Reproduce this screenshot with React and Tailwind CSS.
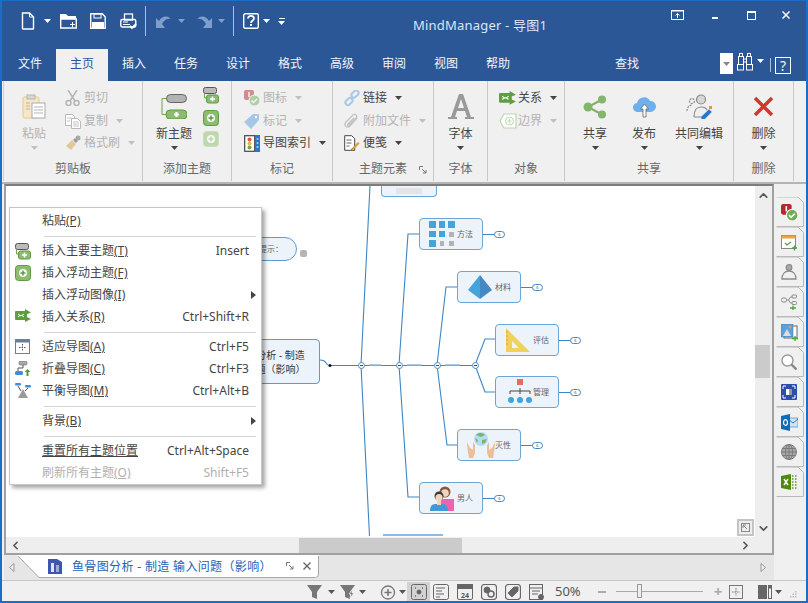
import { ChevronUp, ChevronDown, ChevronLeft, ChevronRight } from "lucide-react";

const Caret = ({ color = "#444", className = "" }) => (
  <svg width="7" height="4" viewBox="0 0 7 4" className={className}><polygon points="0,0 7,0 3.5,4" fill={color} /></svg>
);

// title bar icons
const QatNew = () => (
  <svg width="14" height="18" viewBox="0 0 14 18" fill="none" stroke="#fff" strokeWidth="1.4"><path d="M1.5 1h7l4 4v11.5a.5.5 0 0 1-.5.5H2a.5.5 0 0 1-.5-.5z" /><path d="M8.5 1v4h4" strokeWidth="1" /></svg>
);
const QatOpen = () => (
  <svg width="17" height="16" viewBox="0 0 17 16"><path d="M0 1h6l2 2h8v3H0z" fill="#fff" /><path d="M.7 6h15.6v9H.7z" fill="none" stroke="#fff" strokeWidth="1.4" /><path d="M10 11.5h5M12.5 9v5" stroke="#fff" /></svg>
);
const QatSave = () => (
  <svg width="16" height="16" viewBox="0 0 16 16"><path d="M.7.7h11.5l3 3v11.6H.7z" fill="none" stroke="#fff" strokeWidth="1.4" /><rect x="2" y="9" width="12" height="6" fill="#fff" /><rect x="4" y="1" width="7" height="4" fill="none" stroke="#fff" /></svg>
);
const QatPrint = () => (
  <svg width="17" height="17" viewBox="0 0 17 17" fill="none" stroke="#fff"><rect x="4.5" y="1" width="8" height="6" strokeWidth="1.3" /><rect x=".8" y="6.5" width="15" height="7.5" rx="1.5" strokeWidth="1.4" /><path d="M3 9h5M3 11.5h7" /><path d="M10 13l2 2 4-4" strokeWidth="1.8" /></svg>
);
const QatUndo = ({ flip }) => (
  <svg width="17" height="16" viewBox="0 0 17 16" style={flip ? { transform: "scaleX(-1)" } : undefined}><path d="M1 15V5l3 3C7 3 12 2 16 6c-4-1-7 1-9 5l3 4z" fill="#7f9fca" /></svg>
);
const QatHelp = () => (
  <svg width="16" height="16" viewBox="0 0 16 16"><rect x=".7" y=".7" width="14.600" height="14.600" rx="1.500" fill="none" stroke="#fff" strokeWidth="1.4" /><path d="M5 5.500c0-3.500 6-3.500 6 0 0 2-3 2-3 4.500" fill="none" stroke="#fff" strokeWidth="1.800" /><rect x="7" y="11" width="2" height="2" fill="#fff" /></svg>
);
const Binoculars = () => (
  <svg width="16" height="18" viewBox="0 0 16 18" fill="none" stroke="#fff"><rect x="2.500" y=".5" width="3" height="3" /><rect x="10.500" y=".5" width="3" height="3" /><rect x="1.500" y="3.500" width="5" height="8" /><rect x="9.500" y="3.500" width="5" height="8" /><rect x=".5" y="11.500" width="6" height="5.500" /><rect x="9.500" y="11.500" width="6" height="5.500" /><path d="M6.500 6h3M6.500 9h3" /></svg>
);

// ribbon icons
const PasteIcon = () => (
  <svg width="24" height="26" viewBox="0 0 24 26"><rect x="1" y="3" width="16" height="21" rx="1.500" fill="#f7e6c6" stroke="#e8c78e" /><rect x="5" y="1" width="8" height="4" fill="#d8d8d8" stroke="#b5b5b5" /><rect x="10" y="9" width="13" height="15" fill="#fff" stroke="#a9a9a9" /><path d="M12 13h9M12 16h9M12 19h9M4 9h4M4 12h4M4 15h4" stroke="#b5b5b5" /></svg>
);
const CutIcon = () => (
  <svg width="15" height="16" viewBox="0 0 15 16" fill="none" stroke="#b5b5b5"><path d="M3 0l7 11M12 0L5 11" strokeWidth="1.500" /><circle cx="3.500" cy="13" r="2.500" strokeWidth="1.500" /><circle cx="11.500" cy="13" r="2.500" strokeWidth="1.500" /></svg>
);
const CopyIcon = () => (
  <svg width="16" height="16" viewBox="0 0 16 16" fill="#fff" stroke="#b8b8b8"><path d="M.5 1.500h7l2 2v9h-9z" /><path d="M6.500 5.500h6l3 3v7h-9z" /><path d="M2 5h5M2 8h3M8 9h6M8 11h6M8 13h6" strokeWidth=".8" /></svg>
);
const BrushIcon = () => (
  <svg width="16" height="16" viewBox="0 0 16 16"><path d="M1 11l6-6 4 4-5 6z" fill="#e1c79b" /><path d="M8 5l2-2 3 3-2 2z" fill="#9a9a9a" /><circle cx="13" cy="3" r="2.500" fill="#a8a8a8" /></svg>
);
const NewTopicIcon = () => (
  <svg width="26" height="25" viewBox="0 0 26 25"><path d="M6 4.500H1v16h5" fill="none" stroke="#6fa552" /><rect x="5.500" y=".5" width="20" height="8" rx="4" fill="#b3b3b3" stroke="#666" /><rect x="5" y="16" width="21" height="9" rx="4" fill="#8dbb6f" stroke="#5f9a45" /><path d="M13 20.500h5M15.500 18v5" stroke="#fff" strokeWidth="2" /></svg>
);
const SubTopicIcon = () => (
  <svg width="16" height="17" viewBox="0 0 16 17"><rect x=".5" y=".5" width="13" height="6" rx="2" fill="#bbb" stroke="#555" /><path d="M1.500 7v4h2" fill="none" stroke="#6fa552" /><rect x="3.500" y="8" width="12" height="8" rx="2" fill="#8dbb6f" stroke="#5f9a45" /><path d="M7 12h5M9.500 9.500v5" stroke="#fff" strokeWidth="1.500" /></svg>
);
const FloatIcon = ({ pale }) => (
  <svg width="16" height="16" viewBox="0 0 16 16"><rect x=".5" y=".5" width="15" height="15" rx="3" fill={pale ? "#bcd8ac" : "#8dbb6f"} stroke={pale ? "#c9dfbc" : "#5f9a45"} /><circle cx="8" cy="8" r="4" fill="#fff" opacity=".9" /><path d="M5.500 8h5M8 5.500v5" stroke={pale ? "#bcd8ac" : "#5f9a45"} strokeWidth="1.500" /></svg>
);
const MarkerIcon = ({ size = 17, pale }) => (
  <svg width={size} height={size} viewBox="0 0 16 16" opacity={pale ? 0.5 : 1}><rect x="0" y="0" width="10" height="10" rx="2" fill="#b5282e" /><path d="M5 2v5" stroke="#fff" strokeWidth="1.500" /><circle cx="10.500" cy="10.500" r="5.500" fill="#71ad58" stroke="#fff" /><path d="M7.500 10.500l2 2 3.500-3.500" stroke="#fff" strokeWidth="1.500" fill="none" /></svg>
);
const TagIcon = () => (
  <svg width="16" height="16" viewBox="0 0 16 16"><path d="M0 9l9-8h6v6l-8 9z" fill="#a6c7e8" /><circle cx="12" cy="4" r="1.200" fill="#fff" /></svg>
);
const IndexIcon = () => (
  <svg width="16" height="17" viewBox="0 0 16 17"><rect x=".7" y=".7" width="10" height="15.600" fill="#fff" stroke="#444" strokeWidth="1.200" /><circle cx="5.500" cy="4.500" r="2" fill="#d9534f" /><circle cx="5.500" cy="8.500" r="2" fill="#e3b93c" /><circle cx="5.500" cy="12.500" r="2" fill="#6fa552" /><rect x="11" y="0" width="5" height="17" fill="#2a79c9" /><path d="M12.500 4h2M12.500 8h2M12.500 12h2" stroke="#fff" /></svg>
);
const LinkIcon = () => (
  <svg width="16" height="16" viewBox="0 0 16 16" fill="none" stroke="#a8c8e8" strokeWidth="2"><rect x="7" y="1.500" width="8" height="5" rx="2.500" transform="rotate(-45 11 4)" /><rect x="1" y="9" width="8" height="5" rx="2.500" transform="rotate(-45 5 11.500)" /></svg>
);
const ClipIcon = () => (
  <svg width="15" height="16" viewBox="0 0 15 16" fill="none" stroke="#c3c3c3" strokeWidth="1.300"><path d="M13 5l-7 8c-3 3-7-1-4-4l7-7c2-2 5 1 3 3l-7 7c-1 1-2 0-1-1l6-6" /></svg>
);
const NoteIcon = () => (
  <svg width="16" height="16" viewBox="0 0 16 16"><path d="M.7.700h7l3 3v11.600H.7z" fill="#fff" stroke="#444" /><path d="M2.500 5h5M2.500 8h5M2.500 11h3" stroke="#666" /><path d="M7 14l7-7 1.500 1.500-7 7H7z" fill="#d69b3f" /><path d="M7 14l1.500 1.500H7z" fill="#2a79c9" /></svg>
);
const FontIcon = () => (
  <svg width="26" height="27" viewBox="0 0 26 27"><path d="M11 1h4l8 23h3v2h-9v-2h2l-2-6H9l-2 6h2v2H0v-2h3z" fill="#9a9a9a" /><path d="M13 6l-3 9h6z" fill="#f0f0f0" /></svg>
);
const RelationIcon = ({ size = 16 }) => (
  <svg width={size} height={size * 0.81} viewBox="0 0 16 13"><rect x="0" y="2" width="12" height="9" rx="1" fill="#5d9e3e" /><path d="M10 0l6 3.500L10 6zM10 7l6 3-6 3z" fill="#5d9e3e" /><path d="M3 5l2 1.500L3 8M9 5L7 6.500 9 8M5 6.500h2" stroke="#fff" fill="none" /></svg>
);
const BoundaryIcon = () => (
  <svg width="18" height="16" viewBox="0 0 18 16"><path d="M5 1h12v14H5L1 8z" fill="#fff" stroke="#bcd8ac" strokeWidth="1.200" /><circle cx="10.500" cy="8" r="4" fill="none" stroke="#bcd8ac" /><path d="M8.500 8h4M10.500 6v4" stroke="#bcd8ac" /></svg>
);
const ShareIcon = () => (
  <svg width="24" height="24" viewBox="0 0 24 24"><path d="M19 4.500L5 12l14 7.500" fill="none" stroke="#7fb069" strokeWidth="2" /><circle cx="19" cy="4.500" r="4" fill="#84b56c" /><circle cx="5" cy="12" r="4.500" fill="#84b56c" /><circle cx="19" cy="19.500" r="4" fill="#84b56c" /></svg>
);
const PublishIcon = () => (
  <svg width="23" height="24" viewBox="0 0 23 24"><path d="M5 17a4.500 4.500 0 0 1-1-9 7 7 0 0 1 13-2 5.500 5.500 0 0 1 1 11z" fill="#6db0ec" /><path d="M11.500 9l-4 5h2.500v8h3v-8h2.500z" fill="#fff" stroke="#666" strokeWidth=".8" /></svg>
);
const CoEditIcon = () => (
  <svg width="26" height="25" viewBox="0 0 26 25" fill="none" stroke="#8a8a8a" strokeWidth="1.200"><circle cx="15" cy="5.500" r="4.500" fill="#d6d6d6" /><path d="M8 23c0-7 3-10 7-10s5 1 6 3M8 23h8" /><circle cx="6" cy="7" r="2.500" strokeDasharray="2 1" /><path d="M1 17c0-3 2-6 5-6" strokeDasharray="2 1" /><path d="M16 23l7-7 2 2-7 7h-2z" fill="#2a79c9" stroke="#2a79c9" /><rect x="23" y="12" width="3" height="3" fill="#d69b3f" stroke="none" /></svg>
);
const DeleteIcon = () => (
  <svg width="21" height="21" viewBox="0 0 21 21"><path d="M2 2l17 17M19 2L2 19" stroke="#d0392f" strokeWidth="3.500" /></svg>
);
const Launcher = () => (
  <svg width="8" height="8" viewBox="0 0 8 8" fill="none" stroke="#777"><path d="M.5 4V.5H4M3 3l4 4M7 4v3H4" /></svg>
);

const Small = ({ icon, label, muted, caret, w = "" }) => (
  <div className={"h-[22.500px] flex items-center " + w}>
    <span className="w-[19px] flex items-center shrink-0">{icon}</span>
    <span className={"whitespace-nowrap " + (muted ? "text-[#b3b3b3]" : "text-[#444]")}>{label}</span>
    {caret && <Caret color={muted ? "#c0c0c0" : "#444"} className="ml-[8px]" />}
  </div>
);

const Large = ({ icon, label, w, muted }) => (
  <div className={"flex flex-col items-center shrink-0 -mt-[2px] " + w}>
    <div className="h-[37px] pt-[6px] flex items-center justify-center">{icon}</div>
    <div className={"mt-[3px] h-[17px] leading-[17px] whitespace-nowrap " + (muted ? "text-[#b3b3b3]" : "text-[#444]")}>{label}</div>
    <Caret color={muted ? "#c0c0c0" : "#444"} className="mt-[4px]" />
  </div>
);

const Group = ({ label, w, children, launcher }) => (
  <div className={"relative flex flex-col h-full border-r border-[#c8c8c8] shrink-0 " + w}>
    <div className="flex-1 flex pt-[6px]">{children}</div>
    <div className="h-[22px] leading-[20px] text-center text-[#666] whitespace-nowrap">{label}</div>
    {launcher && <span className="absolute right-[6px] bottom-[7px] flex"><Launcher /></span>}
  </div>
);

const tabs = ["文件", "主页", "插入", "任务", "设计", "格式", "高级", "审阅", "视图", "帮助"];

// canvas nodes
const GridIcon = () => (
  <svg width="28" height="26" viewBox="0 0 28 26"><g fill="#45a3dc"><rect x="0" y="0" width="7" height="7" /><rect x="10" y="0" width="6" height="7" /><rect x="19" y="0" width="7" height="7" /><rect x="0" y="10" width="7" height="6" /><rect x="10" y="10" width="6" height="6" /><rect x="0" y="19" width="7" height="7" /></g><g fill="#b3b3b3"><rect x="20" y="11" width="5" height="5" /><rect x="11" y="20" width="4" height="5" /><rect x="20" y="20" width="5" height="5" /></g></svg>
);
const Pyramid = () => (
  <svg width="24" height="24" viewBox="0 0 24 24"><path d="M12 0L0 15l12 9z" fill="#45a3dc" /><path d="M12 0l12 15-12 9z" fill="#4488c4" /></svg>
);
const Ruler = () => (
  <svg width="24" height="24" viewBox="0 0 24 24"><path fillRule="evenodd" d="M0 0l24 24H0zM6 13v7h7z" fill="#efd25a" /><path d="M0 4h2M0 8h2M0 12h2M0 16h2" stroke="#c9a93a" /></svg>
);
const OrgChart = () => (
  <svg width="26" height="26" viewBox="0 0 26 26"><rect x="10" y="0" width="6" height="6" fill="#ea6a5c" /><path d="M3 15v-3h20v3M13 9v6" fill="none" stroke="#444" strokeWidth="1" /><circle cx="4" cy="21" r="3" fill="#45a3dc" /><circle cx="13" cy="21" r="3" fill="#45a3dc" /><circle cx="22" cy="21" r="3" fill="#45a3dc" /></svg>
);
const Earth = () => (
  <svg width="28" height="26" viewBox="0 0 28 26"><circle cx="14" cy="7" r="7" fill="#b8dbf4" /><path d="M9 3c3-3 7-2 9 0l-4 2zM15 8l5-1-2 4-3 1zM8 6l3 2-1 3z" fill="#75b86a" /><path d="M0 10l3 6 3 2V10l2 3v8l-2 5H2C1 20 0 15 0 10z" fill="#efbd96" /><path d="M28 10l-3 6-3 2V10l-2 3v8l2 5h4c1-6 2-11 2-16z" fill="#efbd96" /></svg>
);
const People = () => (
  <svg width="24" height="26" viewBox="0 0 24 26"><circle cx="15" cy="7" r="5.500" fill="#8a5a3a" /><circle cx="15" cy="8" r="3.800" fill="#f0d5bd" /><path d="M11 14h13v12H11z" fill="#ee63ae" /><circle cx="9" cy="11" r="4.500" fill="#3b3b3b" /><circle cx="9" cy="12.500" r="3.500" fill="#f0d5bd" /><path d="M0 26c0-6 3-7 6-7h6c3 0 6 1 6 7z" fill="#3f9bd8" /><rect x="7" y="15" width="4" height="5" fill="#f0d5bd" /></svg>
);

const nodes = [
  { x: 419, y: 218, h: 32, icon: <GridIcon />, label: "方法", ix: 10, tx: 38 },
  { x: 457, y: 271, h: 32, icon: <Pyramid />, label: "材料", ix: 11, tx: 38 },
  { x: 495, y: 324, h: 32, icon: <Ruler />, label: "评估", ix: 11, tx: 38 },
  { x: 495, y: 376, h: 32, icon: <OrgChart />, label: "管理", ix: 12, tx: 38 },
  { x: 457, y: 429, h: 32, icon: <Earth />, label: "灭性", ix: 10, tx: 38 },
  { x: 419, y: 482, h: 32, icon: <People />, label: "男人", ix: 11, tx: 38 },
];

const Node = ({ x, y, h, icon, label, ix, tx }) => (
  <div className="absolute flex items-center w-[64px] rounded-[4px] border-[1.500px] border-[#6aa5d6] bg-[#ecf3fa]" style={{ left: x - 6, top: y - 186, height: h }}>
    <span className="flex shrink-0" style={{ marginLeft: ix - 1, width: tx - ix }}>{icon}</span>
    <span className="text-[8px] text-[#666] whitespace-nowrap">{label}</span>
    <span className="absolute right-[-23px] top-[12px] w-[11px] h-[7px] rounded-full border border-[#3d86c6] bg-white text-[4px] leading-[5px] text-center text-[#555]">6</span>
    <span className="absolute right-[-12px] top-[14.500px] w-[11px] h-[1.500px] bg-[#3d86c6]" />
  </div>
);

const Knob = ({ x }) => (
  <span className="absolute w-[7px] h-[7px] rounded-full border border-[#4a8cc6] bg-white flex items-center justify-center" style={{ left: x - 9.500, top: 176 }}>
    <span className="w-[3px] h-[1px] bg-[#444]" />
  </span>
);

const MapLines = () => (
  <svg className="absolute left-0 top-0" width="749" height="350" viewBox="6 186 749 350" fill="none" stroke="#3d86c6" strokeWidth="1.100">
    <path d="M320 360c4 0 5 1 6 3s2 2.500 4 2.500H475" />
    <path d="M361 365L370 186M361 365L369.500 536" />
    <path d="M399 365L408 234H419M399 365L408 497H419" />
    <path d="M437 365L446 287H457M437 365L447 445H457" />
    <path d="M475 365L485 339H495M475 365L485 392H495" />
    <path d="M369 365h12M407 365h15M445 365h15" stroke="#8fbbe0" strokeWidth="1.500" />
    <circle cx="330" cy="365.500" r="1.500" fill="#111" stroke="none" />
  </svg>
);

const menu = [
  { label: "粘贴", key: "(P)" },
  { sep: true },
  { label: "插入主要主题", key: "(T)", right: "Insert", icon: <SubTopicIcon /> },
  { label: "插入浮动主题", key: "(F)", icon: <FloatIcon /> },
  { label: "插入浮动图像", key: "(I)", arrow: true },
  { label: "插入关系", key: "(R)", right: "Ctrl+Shift+R", icon: <RelationIcon /> },
  { sep: true },
  { label: "适应导图", key: "(A)", right: "Ctrl+F5", icon: <FitIcon /> },
  { label: "折叠导图", key: "(C)", right: "Ctrl+F3", icon: <FoldIcon /> },
  { label: "平衡导图", key: "(M)", right: "Ctrl+Alt+B", icon: <BalanceIcon /> },
  { sep: true },
  { label: "背景", key: "(B)", arrow: true },
  { sep: true },
  { label: "重置所有主题位置", right: "Ctrl+Alt+Space", under: true },
  { label: "刷新所有主题", key: "(O)", right: "Shift+F5", muted: true },
];

function FitIcon() {
  return (
    <svg width="15" height="15" viewBox="0 0 15 15" fill="none"><rect x=".5" y=".5" width="14" height="14" fill="#fff" stroke="#6d7f96" /><rect x="1" y="1" width="13" height="2.500" fill="#6d7f96" /><path d="M7.500 5v7M4 8.500h7" stroke="#555" strokeDasharray="1.500 1" /></svg>
  );
}
function FoldIcon() {
  return (
    <svg width="16" height="16" viewBox="0 0 16 16"><rect x="4" y="0" width="8" height="4" rx="1.500" fill="#aaa" stroke="#666" strokeWidth=".6" /><path d="M8 4v3H3v4" fill="none" stroke="#555" /><rect x="0" y="10" width="8" height="4" rx="1.500" fill="#3f8fd6" /><path d="M12.500 8l-3 3h2v4h2v-4h2z" fill="#4d9d3a" /></svg>
  );
}
function BalanceIcon() {
  return (
    <svg width="16" height="16" viewBox="0 0 16 16"><rect x="0" y="0" width="6" height="2.500" rx="1" fill="#3f8fd6" /><rect x="10" y="2" width="6" height="2.500" rx="1" fill="#3f8fd6" /><path d="M3 3l3 5M13 5l-3 3" stroke="#555" fill="none" /><path d="M8 6l-5 9h10z" fill="#9a9a9a" /></svg>
  );
}

const MenuRow = ({ item }) => {
  if (item.sep) return <div className="h-[1px] my-[3.500px] ml-[34px] mr-[5px] bg-[#d4d4d4]" />;
  const color = item.muted ? "text-[#b0b0b0]" : "text-[#444]";
  return (
    <div className={"relative h-[22px] flex items-center pl-[32px] pr-[12px] whitespace-nowrap " + color}>
      {item.icon && <span className="absolute left-[5px] top-[3px] flex">{item.icon}</span>}
      <span className={item.under ? "underline" : ""}>{item.label}</span>
      {item.key && <span className="underline">{item.key}</span>}
      {item.right && <span className="ml-auto">{item.right}</span>}
      {item.arrow && <span className="absolute right-[5px] top-[7px] w-0 h-0 border-y-[4px] border-y-transparent border-l-[5px] border-l-[#444]" />}
    </div>
  );
};

// side panel icons
const SCal = () => (
  <svg width="16" height="17" viewBox="0 0 16 17"><rect x=".5" y="1.500" width="14" height="13" fill="#fff" stroke="#888" /><rect x=".5" y="1.500" width="14" height="3" fill="#f0a23c" /><path d="M4 9l2 2 4-3" stroke="#5d9e3e" fill="none" strokeWidth="1.300" /><path d="M11 14h5M13.500 11.500v5" stroke="#4da43a" strokeWidth="1.300" /></svg>
);
const SPerson = () => (
  <svg width="16" height="16" viewBox="0 0 16 16" fill="none" stroke="#8a8a8a" strokeWidth="1.300"><circle cx="8" cy="3.500" r="2.800" fill="#aaa" /><path d="M1 15c0-5 3-8 7-8s7 3 7 8z" /></svg>
);
const SMap = () => (
  <svg width="16" height="16" viewBox="0 0 16 16" fill="none" stroke="#8a8a8a"><rect x=".5" y="4" width="5" height="4" rx="1.500" /><path d="M5.500 6h2l2-3h2M7.500 6l2 3h2" /><rect x="11" y="1" width="4.500" height="3" rx="1" /><rect x="11" y="7.500" width="4.500" height="3" rx="1" /><path d="M9 14h6M12 11.500v5" stroke="#4da43a" strokeWidth="1.300" /></svg>
);
const SImage = () => (
  <svg width="17" height="17" viewBox="0 0 17 17"><rect x="3" y="2" width="13" height="12" fill="#fff" stroke="#666" /><rect x="0" y="0" width="12" height="13" fill="#5f9fdc" stroke="#3b78b8" strokeWidth=".5" /><path d="M2 12l4-7 4 7z" fill="#ddd" /><circle cx="9" cy="3" r="1.500" fill="#e89a4c" /><path d="M11 14.500h6M14 12v5" stroke="#4da43a" strokeWidth="1.300" /></svg>
);
const SSearch = () => (
  <svg width="16" height="16" viewBox="0 0 16 16" fill="none"><circle cx="6.500" cy="6.500" r="5.500" stroke="#999" strokeWidth="1.400" fill="#fff" /><path d="M10.500 10.500l5 5" stroke="#888" strokeWidth="2.400" /></svg>
);
const SFocus = () => (
  <svg width="16" height="16" viewBox="0 0 16 16"><rect x="0" y="0" width="16" height="16" rx="1" fill="#2e4fa8" /><path d="M2 5V2h3M11 2h3v3M14 11v3h-3M5 14H2v-3" stroke="#fff" fill="none" /><rect x="5" y="5" width="6" height="6" fill="#fff" /><rect x="8" y="5" width="3" height="6" fill="#9a9a9a" /></svg>
);
const SOutlook = () => (
  <svg width="17" height="17" viewBox="0 0 17 17"><rect x="7" y="4" width="10" height="9" fill="#cfe6f8" stroke="#2a79c9" strokeWidth=".6" /><path d="M7 5l5 4 5-4" fill="none" stroke="#2a79c9" /><path d="M0 2l9-2v17l-9-2z" fill="#0f6cbd" /><ellipse cx="4.500" cy="8.500" rx="2" ry="2.800" fill="none" stroke="#fff" strokeWidth="1.200" /></svg>
);
const SGlobe = () => (
  <svg width="16" height="16" viewBox="0 0 16 16" fill="#a8a8a8" stroke="#7b7b7b"><circle cx="8" cy="8" r="7.500" /><ellipse cx="8" cy="8" rx="3.500" ry="7.500" fill="none" /><path d="M.5 8h15M1.500 4.500h13M1.500 11.500h13M8 .5v15" fill="none" /></svg>
);
const SExcel = () => (
  <svg width="17" height="16" viewBox="0 0 17 16"><path d="M0 2l10-2v16L0 14z" fill="#4f8a10" /><path d="M3 5l4 6M7 5l-4 6" stroke="#fff" strokeWidth="1.400" /><path d="M11 2h1.500M14 2h1.500M11 5h1.500M14 5h1.500M11 8h1.500M14 8h1.500M11 11h1.500M14 11h1.500M11 14h1.500M14 14h1.500" stroke="#5d9e1e" strokeWidth="1.400" /></svg>
);

const sideTabs = [<MarkerIcon key="0" />, <SCal key="1" />, <SPerson key="2" />, <SMap key="3" />, <SImage key="4" />, <SSearch key="5" />, <SFocus key="6" />, <SOutlook key="7" />, <SGlobe key="8" />, <SExcel key="9" />];

// status bar icons
const Funnel = ({ bolt }) => (
  <svg width="16" height="14" viewBox="0 0 16 14"><path d="M0 0h15l-5 7v7l-5-2V7z" fill="#777" />{bolt && <path d="M12 5l-3 4h2l-1 4 4-5h-2z" fill="#777" stroke="#f0f0f0" strokeWidth=".7" />}</svg>
);
const StatusBox = ({ children }) => (
  <svg width="16" height="16" viewBox="0 0 16 16" fill="none" stroke="#666">{children}</svg>
);

export default function App() {
  return (
    <div className="w-[808px] h-[603px] overflow-hidden flex flex-col bg-[#f0f0f0] border-x-2 border-b-2 border-t border-[#1b6ec8] font-['Noto_Sans','Noto_Sans_CJK_SC',sans-serif] text-[12px]">
      {/* title bar */}
      <div className="relative h-[48px] shrink-0 bg-[#2b5797] flex items-start text-white">
        <div className="flex items-center h-[40px] pl-[19px]">
          <QatNew />
          <Caret color="#fff" className="ml-[9px]" />
          <span className="ml-[9px] flex"><QatOpen /></span>
          <span className="ml-[13px] flex"><QatSave /></span>
          <span className="ml-[14px] flex"><QatPrint /></span>
          <span className="ml-[8px] w-[1px] h-[30px] bg-[#a9bfdc]" />
          <span className="ml-[9px] flex"><QatUndo /></span>
          <Caret color="#7f9fca" className="ml-[6px]" />
          <span className="ml-[11px] flex"><QatUndo flip /></span>
          <Caret color="#7f9fca" className="ml-[5px]" />
          <span className="ml-[8px] w-[1px] h-[30px] bg-[#a9bfdc]" />
          <span className="ml-[9px] flex"><QatHelp /></span>
          <Caret color="#fff" className="ml-[4px]" />
          <span className="ml-[8px] flex flex-col gap-[2px] items-center"><span className="w-[6px] h-[1px] bg-white" /><Caret color="#fff" /></span>
        </div>
        <div className="absolute left-[411px] top-[15px] text-[13px] leading-[18px] text-[#dbe6f5] whitespace-nowrap tracking-[0.2px]">MindManager - 导图1</div>
        <div className="ml-auto flex items-center h-[28px] text-white">
          <svg width="13" height="10" viewBox="0 0 13 10" fill="none" stroke="#fff" className="mr-[28px]"><rect x=".5" y=".5" width="12" height="9" /><path d="M1 1h11" /><path d="M6.500 8V3.500M4.500 5.500l2-2 2 2" /></svg>
          <span className="w-[6px] h-[2px] bg-white mt-[6px] mr-[29px]" />
          <span className="w-[9px] h-[9px] border border-white border-t-2 mr-[26px]" />
          <svg width="8" height="8" viewBox="0 0 8 8" stroke="#fff" strokeWidth="1.500" className="mr-[16px]"><path d="M.5.5l7 7M7.500.5l-7 7" /></svg>
        </div>
      </div>

      {/* tabs */}
      <div className="h-[32px] shrink-0 bg-[#2b5797] flex items-end pl-[2px] text-[#f2f5fa]">
        {tabs.map((t, i) => (
          <div key={t} className={i === 1 ? "w-[52px] h-[32px] bg-[#f0f0f0] text-[#2b5797] flex items-center justify-center pb-[2px]" : "w-[52px] h-[32px] flex items-center justify-center pb-[2px]"}>{t}</div>
        ))}
        <div className="ml-[91px] h-[32px] flex items-center pb-[2px]">查找</div>
        <div className="ml-[81px] h-[21px] w-[13px] mb-[7px] bg-white flex items-center justify-center"><Caret color="#888" /></div>
        <div className="ml-[4px] h-[32px] pb-[6px] flex items-center"><Binoculars /></div>
        <Caret color="#fff" className="ml-[4px] mb-[18px]" />
        <span className="ml-[6px] mb-[9px] w-[1px] h-[14px] bg-[#a9bfdc]" />
        <div className="ml-[4px] mb-[7px] w-[16px] h-[17px] border border-white flex items-center justify-center text-[14px] leading-none">?</div>
      </div>

      {/* ribbon */}
      <div className="h-[103px] shrink-0 pl-[1px] border-b-2 border-[#b4b4b4]">
        <div className="h-[100px] border-l border-[#d0d0d0] flex">
          <Group label="剪贴板" w="w-[139px]">
            <div className="pl-[12px] w-[57px]"><Large icon={<PasteIcon />} label="粘贴" w="w-[36px]" muted /></div>
            <div className="pl-[4px]">
              <Small icon={<CutIcon />} label="剪切" muted />
              <Small icon={<CopyIcon />} label="复制" muted caret />
              <Small icon={<BrushIcon />} label="格式刷" muted caret />
            </div>
          </Group>
          <Group label="添加主题" w="w-[89px]">
            <div className="pl-[11px] w-[60px]"><Large icon={<NewTopicIcon />} label="新主题" w="w-[40px]" /></div>
            <div className="flex flex-col gap-[5.500px]"><SubTopicIcon /><FloatIcon /><FloatIcon pale /></div>
          </Group>
          <Group label="标记" w="w-[101px]">
            <div className="pl-[12px]">
              <Small icon={<MarkerIcon size={16} pale />} label="图标" muted caret />
              <Small icon={<TagIcon />} label="标记" muted caret />
              <Small icon={<IndexIcon />} label="导图索引" caret />
            </div>
          </Group>
          <Group label="主题元素" w="w-[101px]" launcher>
            <div className="pl-[11px]">
              <Small icon={<LinkIcon />} label="链接" caret />
              <Small icon={<ClipIcon />} label="附加文件" muted caret />
              <Small icon={<NoteIcon />} label="便笺" caret />
            </div>
          </Group>
          <Group label="字体" w="w-[54px]">
            <Large icon={<FontIcon />} label="字体" w="w-full" />
          </Group>
          <Group label="对象" w="w-[77px]">
            <div className="pl-[11px]">
              <Small icon={<RelationIcon size={17} />} label="关系" caret />
              <Small icon={<BoundaryIcon />} label="边界" muted caret />
            </div>
          </Group>
          <Group label="共享" w="w-[169px]">
            <Large icon={<ShareIcon />} label="共享" w="w-[56px] ml-[2px]" />
            <Large icon={<PublishIcon />} label="发布" w="w-[42px]" />
            <Large icon={<CoEditIcon />} label="共同编辑" w="w-[68px]" />
          </Group>
          <Group label="删除" w="w-[60px]">
            <Large icon={<DeleteIcon />} label="删除" w="w-full" />
          </Group>
        </div>
      </div>

      {/* work area */}
      <div className="flex-1 flex min-h-0">
        <div className="flex-1 flex flex-col pl-[2px] min-w-0">
          <div className="flex-1 flex flex-col border-2 border-[#a0a0a0] border-t-[#7d7d7d] min-h-0">
            <div className="flex-1 flex min-h-0">
              <div className="relative flex-1 bg-white overflow-hidden">
                <MapLines />
                <div className="absolute left-[375px] top-0 w-[56px] h-[11px] rounded-b-[4px] border-[1.500px] border-t-0 border-[#6aa5d6] bg-[#ecf3fa] flex justify-center items-center"><span className="w-[26px] h-[6px] bg-[#e4e4e4]" /></div>
                <div className="absolute left-[377px] top-[348px] w-[60px] h-[2px] bg-[#8fbbe0]" />
                {nodes.map(n => <Node key={n.label} {...n} />)}
                {[361, 399, 437, 475].map(x => <Knob key={x} x={x} />)}
                <div className="absolute left-[196px] top-[153px] w-[118px] h-[45px] rounded-[4px] border-[1.500px] border-[#5c9bd1] bg-[#ecf3fa] flex flex-col items-center justify-center pl-[9px] text-[10px] text-[#333] whitespace-nowrap">
                  <span className="h-[14px] leading-[14px] overflow-hidden">鱼骨图分析 - 制造</span>
                  <span className="h-[14px] leading-[14px] overflow-hidden">输入问题（影响）</span>
                </div>
                <div className="absolute left-[220px] top-[51px] w-[71px] h-[24px] rounded-r-[12px] border-[1.500px] border-[#5c9bd1] bg-[#ecf3fa] flex items-center justify-end pr-[13px] text-[8px] text-[#666]">提示：</div>
                <span className="absolute left-[294px] top-[64px] w-[7px] h-[7px] rounded-[2px] bg-[#b5b5b5]" />
                <div className="absolute right-[1px] bottom-[1px] w-[17px] h-[17px] border-[2px] border-[#c4c4c4] bg-[#eee] flex items-center justify-center">
                  <svg width="9" height="9" viewBox="0 0 9 9" fill="none" stroke="#888"><rect x=".5" y=".5" width="8" height="8" /><path d="M2 2l4 4M2 5V2h3" /></svg>
                </div>
                {/* context menu */}
                <div className="absolute left-[3px] top-[21px] w-[253px] h-[278px] pt-[2px] bg-white border border-[#c6c6c6] shadow-[3px_3px_4px_rgba(0,0,0,0.35)] text-[12px]">
                  {menu.map((m, i) => <MenuRow key={i} item={m} />)}
                </div>
              </div>
              <div className="w-[17px] shrink-0 bg-[#eee] flex flex-col items-center relative">
                <ChevronUp size={13} strokeWidth={3} className="text-[#555] mt-[3px]" />
                <div className="mt-[143px] w-[15px] h-[33px] bg-[#cbcbcb] self-start" />
                <ChevronDown size={13} strokeWidth={3} className="text-[#555] mt-auto mb-[2px]" />
              </div>
            </div>
            <div className="h-[16px] shrink-0 bg-[#eee] flex items-center">
              <ChevronLeft size={13} strokeWidth={3} className="text-[#555] ml-[3px]" />
              <div className="ml-[277px] w-[163px] h-[15px] bg-[#cbcbcb]" />
              <ChevronRight size={13} strokeWidth={3} className="text-[#555] ml-[277px]" />
            </div>
          </div>
          {/* document tab strip */}
          <div className="relative h-[25px] shrink-0 bg-[#e6e6e6] flex items-start">
            <svg width="6" height="9" viewBox="0 0 6 9" fill="#eee" stroke="#999" className="absolute left-[5px] top-[8px]"><path d="M5 .5v8L.5 4.500z" /></svg>
            <svg width="6" height="9" viewBox="0 0 6 9" fill="#eee" stroke="#999" className="absolute right-[8px] top-[8px]"><path d="M1 .5v8l4.500-4z" /></svg>
            <div className="relative ml-[13px] w-[302px] h-[23px] flex items-center">
              <svg className="absolute left-0 top-0" width="302" height="23" viewBox="0 0 302 23"><path d="M0 0H301.500V19q0 3.500-3 3.500H22z" fill="#fff" stroke="#a8a8a8" /><path d="M0 0H302" stroke="#fff" strokeWidth="2" /></svg>
              <svg width="14" height="15" viewBox="0 0 14 15" className="relative ml-[31px]"><path d="M0 0h9l5 3v12H0z" fill="#3f56b0" /><rect x="3" y="4" width="3" height="9" fill="#dfe3f3" /><rect x="8" y="6" width="3" height="7" fill="#9ea9d6" /></svg>
              <span className="relative ml-[10px] text-[#1c62b9] whitespace-nowrap tracking-[0.35px]">鱼骨图分析 - 制造 输入问题（影响）</span>
              <span className="absolute right-[25px] top-[7px] flex"><Launcher /></span>
              <svg width="8" height="8" viewBox="0 0 8 8" stroke="#666" strokeWidth="1.400" className="absolute right-[8px] top-[7px]"><path d="M.5.500l7 7M7.500.500l-7 7" /></svg>
            </div>
          </div>
        </div>
        {/* side panel */}
        <div className="w-[32px] shrink-0 pt-[13px] pl-[2px] flex flex-col">
          {sideTabs.map((icon, i) => (
            <div key={i} className="relative w-[28px] h-[30px] flex items-center justify-center pr-[2px]">
              <svg className="absolute left-0 top-0" width="28" height="30" viewBox="0 0 28 30" fill="none" stroke="#b9b9b9"><path d="M.5 0H22l5.500 5.500V29.500H.5" /></svg>
              <span className="relative flex">{icon}</span>
            </div>
          ))}
        </div>
      </div>

      {/* status bar */}
      <div className="h-[21px] shrink-0 pt-[1px] border-t border-[#c6c6c6] flex items-center text-[#444]">
        <div className="ml-[305px] flex items-center"><Funnel /><Caret color="#555" className="ml-[5px]" /></div>
        <div className="ml-[5px] flex items-center"><Funnel bolt /><Caret color="#555" className="ml-[3px]" /></div>
        <div className="ml-[14px] flex items-center">
          <svg width="16" height="16" viewBox="0 0 16 16" fill="none" stroke="#777" strokeWidth="1.300"><circle cx="8" cy="8.500" r="6.500" /><path d="M4.500 8.500h7M8 5v7" strokeWidth="1.600" /></svg>
          <Caret color="#555" className="ml-[3px]" />
        </div>
        <div className="ml-[1px] w-[23px] h-[19px] bg-[#d2d2d2] flex items-center justify-center">
          <StatusBox><rect x=".5" y=".5" width="15" height="15" rx="2" /><circle cx="8" cy="8" r="2" fill="#666" /><path d="M4 4h1M11 4h1M4 12h1M11 12h1" strokeWidth="1.500" /></StatusBox>
        </div>
        <div className="ml-[3px] flex"><StatusBox><rect x=".5" y=".5" width="15" height="15" rx="2" /><path d="M3 4h9M3 7h6M3 10h8M3 13h4" /></StatusBox></div>
        <div className="ml-[8px] flex"><svg width="16" height="16" viewBox="0 0 16 16" fill="none"><rect x=".5" y=".5" width="15" height="15" rx="1.500" stroke="#666" /><rect x="0" y="0" width="16" height="5" fill="#666" /><text x="8" y="13.500" textAnchor="middle" fontSize="7" fontWeight="700" fill="#555">24</text></svg></div>
        <div className="ml-[8px] flex"><StatusBox><rect x=".5" y=".5" width="15" height="15" rx="3" strokeWidth="1.200" /><circle cx="6" cy="6" r="3" fill="#666" /><circle cx="10" cy="10" r="3" strokeWidth="1.500" /></StatusBox></div>
        <div className="ml-[8px] flex"><StatusBox><rect x=".5" y=".5" width="15" height="15" rx="3" strokeWidth="1.200" /><path d="M3 9l6-6h4v4l-6 6z" fill="#666" /></StatusBox></div>
        <div className="ml-[8px] flex"><StatusBox><rect x=".5" y=".5" width="13" height="15" /><path d="M.5 4h13M3 7h8M3 10h6" /><circle cx="12" cy="13" r="2.500" fill="#666" /></StatusBox></div>
        <span className="ml-[10px] text-[13px] text-[#555] leading-none">50%</span>
        <span className="ml-[17px] w-[8px] h-[2px] bg-[#aaa]" />
        <div className="relative ml-[10px] w-[87px] h-[1px] bg-[#aaa]">
          <span className="absolute left-[21px] -top-[7px] w-[5px] h-[14px] bg-[#eee] border border-[#999]" />
        </div>
        <span className="ml-[11px] text-[15px] leading-none text-[#aaa] font-bold">+</span>
        <div className="ml-[7px] flex"><svg width="14" height="14" viewBox="0 0 14 14" fill="none" stroke="#777"><rect x=".5" y=".5" width="13" height="13" /><path d="M7 3v8M3 7h8" strokeDasharray="1.500 1" /></svg></div>
        <div className="ml-[15px] flex"><svg width="14" height="14" viewBox="0 0 14 14"><rect x="0" y="0" width="9" height="14" fill="#666" /><rect x="10" y="0" width="4" height="3" fill="#666" /><rect x="10.500" y="3" width="3" height="10.500" fill="none" stroke="#666" /></svg></div>
        <Caret color="#555" className="ml-[3px]" />
        <svg width="7" height="7" viewBox="0 0 7 7" fill="#bbb" className="ml-[8px] mt-[6px]"><rect x="5" y="0" width="1.500" height="1.500" /><rect x="2.500" y="2.500" width="1.500" height="1.500" /><rect x="5" y="2.500" width="1.500" height="1.500" /><rect x="0" y="5" width="1.500" height="1.500" /><rect x="2.500" y="5" width="1.500" height="1.500" /><rect x="5" y="5" width="1.500" height="1.500" /></svg>
      </div>
    </div>
  );
}
